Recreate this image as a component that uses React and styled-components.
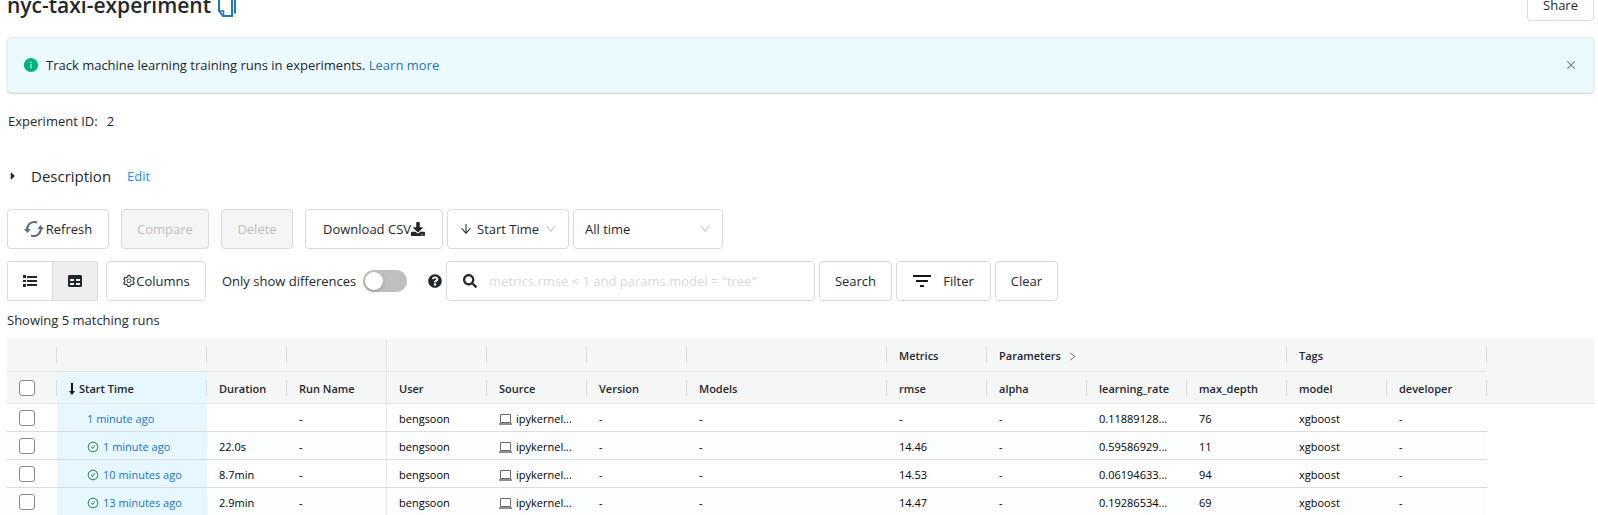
import React from "react";
import styled, { createGlobalStyle } from "styled-components";
import {
  AiFillInfoCircle, AiOutlineArrowDown, AiOutlineCheckCircle, AiOutlineClose,
  AiOutlineDown, AiOutlineRight, AiOutlineSetting,
} from "react-icons/ai";
import { FaCaretRight, FaDownload, FaQuestionCircle, FaSearch } from "react-icons/fa";

const GlobalStyle = createGlobalStyle`
  * { box-sizing: border-box; }
  body {
    margin: 0;
    background: #fff;
    color: #1f272d;
    font: 13px/20px "Open Sans", "Noto Sans", sans-serif;
  }
  button, input, select { font: inherit; color: inherit; }
  a { color: #2374bb; text-decoration: none; }
  svg { flex: none; }
`;

const Page = styled.main`
  padding: 0 4px 0 7px;
`;

const Header = styled.header`
  display: flex;
  justify-content: space-between;
  align-items: center;
  margin-top: -11px;
  height: 32px;
`;

const TitleGroup = styled.div`
  display: flex;
  align-items: center;
  gap: 7px;
`;

const Title = styled.h1`
  margin: 0;
  font-size: 21px;
  line-height: 28px;
  font-weight: 600;
`;

const IconButton = styled.button`
  display: inline-flex;
  align-items: center;
  justify-content: center;
  padding: 0;
  border: 0;
  background: none;
  color: ${(p) => p.$color || "inherit"};
  cursor: pointer;
`;

const Button = styled.button`
  display: inline-flex;
  align-items: center;
  justify-content: center;
  gap: ${(p) => p.$gap || 0}px;
  flex: none;
  width: ${(p) => p.$width}px;
  height: ${(p) => (p.$small ? 32 : 40)}px;
  padding: 0;
  border: 1px solid #d9d9d9;
  border-radius: 4px;
  background: #fff;
  cursor: pointer;
  white-space: nowrap;

  &:disabled {
    background: #f5f5f5;
    color: #bfbfbf;
    cursor: default;
  }
`;

const Alert = styled.section`
  display: flex;
  align-items: center;
  gap: 7px;
  height: 56px;
  margin-top: 16px;
  padding: 0 16px 0 15px;
  border: 1px solid #e4eeee;
  border-radius: 4px;
  background: #ebfaff;
  box-shadow: 0 1px 2px rgba(0, 0, 0, 0.16);

  > svg { color: #00b379; }
  > span { flex: 1; }
`;

const Meta = styled.div`
  display: flex;
  gap: 9px;
  margin-top: 18px;
  padding-left: 1px;
`;

const Description = styled.div`
  display: flex;
  align-items: center;
  gap: 16px;
  margin-top: 33px;
  height: 24px;
`;

const Disclosure = styled.button`
  display: flex;
  align-items: center;
  gap: 12px;
  padding: 0;
  border: 0;
  background: none;
  font-size: 15px;
`;

const EditLink = styled.a`
  color: #1890ff;
`;

const Toolbar = styled.div`
  display: flex;
  align-items: center;
  gap: 4px;
  margin-top: ${(p) => p.$top}px;
`;

const Actions = styled.div`
  display: flex;
  gap: 12px;
`;

const SelectBox = styled.label`
  display: flex;
  align-items: center;
  gap: 4px;
  width: ${(p) => p.$width}px;
  height: 40px;
  padding: 0 11px;
  border: 1px solid #d9d9d9;
  border-radius: 4px;

  select {
    flex: 1;
    min-width: 0;
    padding: 0;
    border: 0;
    outline: 0;
    background: none;
    appearance: none;
  }
  > svg:last-child { color: #bfbfbf; }
`;

const ViewSwitch = styled.div`
  display: flex;
  margin-right: 4px;
`;

const ViewButton = styled(Button)`
  border-radius: ${(p) => (p.$active ? "0 2px 2px 0" : "2px 0 0 2px")};
  border-left-width: ${(p) => (p.$active ? 0 : 1)}px;
  background: ${(p) => (p.$active ? "#eee" : "#fff")};
`;

const SwitchLabel = styled.label`
  display: flex;
  align-items: center;
  justify-content: space-between;
  width: 185px;
  margin-left: 12px;
  white-space: nowrap;
`;

const Switch = styled.input`
  appearance: none;
  display: flex;
  align-items: center;
  width: 44px;
  height: 22px;
  margin: 0;
  padding: 2px;
  border-radius: 11px;
  background: #bfbfbf;

  &::before {
    content: "";
    width: 18px;
    height: 18px;
    border-radius: 9px;
    background: #fff;
    box-shadow: 0 2px 4px rgba(0, 35, 11, 0.2);
  }
`;

const HelpButton = styled(IconButton)`
  margin-left: 17px;
`;

const SearchBox = styled.label`
  display: flex;
  align-items: center;
  gap: 12px;
  width: 369px;
  height: 40px;
  padding: 0 16px;
  border: 1px solid #d9d9d9;
  border-radius: 4px;

  input {
    flex: 1;
    min-width: 0;
    padding: 0;
    border: 0;
    outline: 0;
  }
  input::placeholder { color: #d9d9d9; opacity: 1; }
`;

const Summary = styled.p`
  margin: 9px 0;
`;

const Table = styled.table`
  width: 100%;
  table-layout: fixed;
  border-collapse: separate;
  border-spacing: 0;
  font-size: 11px;
  line-height: 16px;
`;

const HeadCell = styled.th`
  height: ${(p) => (p.$group ? 33 : 32)}px;
  padding: ${(p) => (p.$check ? "0 12px" : "2px 12px 0")};
  border-bottom: 1px solid ${(p) => (p.$filler && p.$group ? "#f5f7f7" : "#e2e4e5")};
  border-right: ${(p) => (p.$pinned ? "1px solid #e2e4e5" : 0)};
  background: ${(p) => (p.$pinned || p.$filler ? "none" : "linear-gradient(#d9dcde, #d9dcde) right center / 1px 16px")} no-repeat
    ${(p) => (p.$sorted ? "#e6f7ff" : "#f5f7f7")};
  text-align: left;
  font-weight: 600;
  white-space: nowrap;
`;

const HeadLabel = styled.span`
  display: flex;
  align-items: center;
  gap: ${(p) => p.$gap || 0}px;
`;

const Row = styled.tr`
  background: ${(p) => (p.$odd ? "#fcfdfe" : "#fff")};
`;

const Cell = styled.td`
  height: 28px;
  padding: 2px 12px 0;
  border-bottom: 1px solid #d9dcde;
  border-right: ${(p) => (p.$pinned ? "1px solid #e8eaeb" : 0)};
  color: #000;
  white-space: nowrap;
  overflow: hidden;
  text-overflow: ellipsis;

  tr:last-child > & {
    height: 27px;
    border-bottom: 0;
  }
`;

const CheckCell = styled(Cell)`
  padding-top: 0;
`;

const TimeCell = styled(Cell)`
  padding-left: 30px;
  background: #e6f7ff;
`;

const FillerCell = styled(Cell)`
  border-bottom: 0;
  background: #fff;
`;

const Inline = styled.span`
  display: flex;
  align-items: center;
  gap: 4px;

  > svg { color: #2e8555; }
`;

const Checkbox = styled.input`
  appearance: none;
  display: block;
  width: 16px;
  height: 16px;
  margin: 0;
  border: 1px solid #7f8b94;
  border-radius: 3px;
  background: #fff;
`;

const CopyIcon = () => (
  <svg width="18" height="24" viewBox="0 0 18 24" fill="none" stroke="#2374bb" strokeWidth="2">
    <path d="M1 1v17l4 5h9V1z" />
    <path d="M1.500 18H5.500V22.500" strokeWidth="1.500" />
    <path d="M17 1v19.500" />
  </svg>
);

const RefreshIcon = () => (
  <svg width="20" height="18" viewBox="0 0 20 18" fill="none" stroke="#5b6b77" strokeWidth="2">
    <path d="M3 10C3 4 8 0.500 13 2.500" />
    <path d="M17 8C17 14 12 17.500 7 15.500" />
    <path d="M0 9h6.500L3.500 13z" fill="#5b6b77" stroke="none" />
    <path d="M13.500 9H20L16.500 5z" fill="#5b6b77" stroke="none" />
  </svg>
);

const ListIcon = () => (
  <svg width="14" height="12" viewBox="0 0 14 12" fill="#1f272d">
    <path d="M0 0h3v3H0zM0 5h3v2H0zM0 9h3v3H0zM4 1h10v2H4zM4 5h10v2H4zM4 9h10v2H4z" />
  </svg>
);

const TableIcon = () => (
  <svg width="14" height="12" viewBox="0 0 14 12" fill="#1f272d">
    <path fillRule="evenodd" d="M1 0h12l1 1v10l-1 1H1l-1-1V1zM2 4v2h4V4zM8 4v2h4V4zM2 8v2h4V8zM8 8v2h4V8z" />
  </svg>
);

const FilterIcon = () => (
  <svg width="18" height="12" viewBox="0 0 18 12" fill="#11171c">
    <rect width="18" height="2" rx="0.500" />
    <rect x="3" y="5" width="12" height="2" rx="0.500" />
    <rect x="7" y="10" width="4" height="2" rx="0.500" />
  </svg>
);

const SortIcon = () => (
  <svg width="6" height="12" viewBox="0 0 6 12" fill="#11171c">
    <path d="M2 0h2v8h2l-3 4-3-4h2z" />
  </svg>
);

const LaptopIcon = () => (
  <svg width="13" height="12" viewBox="0 0 13 12" fill="none" stroke="#6b6b6b">
    <path d="M1.500 1.500h10v8h-10z" />
    <path d="M0 11h13" strokeWidth="2" stroke="#8c8c8c" />
  </svg>
);

const COLUMNS = [
  { label: "Duration", width: 80 },
  { label: "Run Name", width: 100, pinned: true },
  { label: "User", width: 100 },
  { label: "Source", width: 100 },
  { label: "Version", width: 100 },
  { label: "Models", width: 200 },
  { label: "rmse", width: 100 },
  { label: "alpha", width: 100 },
  { label: "learning_rate", width: 100 },
  { label: "max_depth", width: 100 },
  { label: "model", width: 100 },
  { label: "developer", width: 100 },
];

const RUNS = [
  { time: "1 minute ago", duration: "", rmse: "-", rate: "0.11889128...", depth: 76 },
  { time: "1 minute ago", done: true, duration: "22.0s", rmse: "14.46", rate: "0.59586929...", depth: 11 },
  { time: "10 minutes ago", done: true, duration: "8.7min", rmse: "14.53", rate: "0.06194633...", depth: 94 },
  { time: "13 minutes ago", done: true, duration: "2.9min", rmse: "14.47", rate: "0.19286534...", depth: 69 },
];

function RunsTable() {
  return (
    <Table>
      <colgroup>
        <col width="50" />
        <col width="150" />
        {COLUMNS.map((c) => <col key={c.label} width={c.width} />)}
        <col />
      </colgroup>
      <thead>
        <tr>
          <HeadCell $group />
          <HeadCell $group />
          <HeadCell $group />
          <HeadCell $group $pinned />
          <HeadCell $group />
          <HeadCell $group />
          <HeadCell $group />
          <HeadCell $group />
          <HeadCell $group>Metrics</HeadCell>
          <HeadCell $group colSpan={3}>
            <HeadLabel $gap={6}>Parameters <AiOutlineRight size={11} color="#6b7780" /></HeadLabel>
          </HeadCell>
          <HeadCell $group colSpan={2}>Tags</HeadCell>
          <HeadCell $group $filler />
        </tr>
        <tr>
          <HeadCell $check><Checkbox type="checkbox" aria-label="Select all runs" /></HeadCell>
          <HeadCell $sorted><HeadLabel $gap={4}><SortIcon />Start Time</HeadLabel></HeadCell>
          {COLUMNS.map((c) => <HeadCell key={c.label} $pinned={c.pinned}>{c.label}</HeadCell>)}
          <HeadCell $filler />
        </tr>
      </thead>
      <tbody>
        {RUNS.map((r, i) => (
          <Row key={i} $odd={i % 2 === 1}>
            <CheckCell><Checkbox type="checkbox" aria-label={`Select run ${i + 1}`} /></CheckCell>
            <TimeCell>
              <Inline>
                {r.done && <AiOutlineCheckCircle size={12} />}
                <a href="#run">{r.time}</a>
              </Inline>
            </TimeCell>
            <Cell>{r.duration}</Cell>
            <Cell $pinned>-</Cell>
            <Cell>bengsoon</Cell>
            <Cell><Inline><LaptopIcon />ipykernel...</Inline></Cell>
            <Cell>-</Cell>
            <Cell>-</Cell>
            <Cell>{r.rmse}</Cell>
            <Cell>-</Cell>
            <Cell>{r.rate}</Cell>
            <Cell>{r.depth}</Cell>
            <Cell>xgboost</Cell>
            <Cell>-</Cell>
            <FillerCell />
          </Row>
        ))}
      </tbody>
    </Table>
  );
}

export default function App() {
  return (
    <Page>
      <GlobalStyle />
      <Header>
        <TitleGroup>
          <Title>nyc-taxi-experiment</Title>
          <IconButton aria-label="Copy name"><CopyIcon /></IconButton>
        </TitleGroup>
        <Button $width={67} $small>Share</Button>
      </Header>

      <Alert>
        <AiFillInfoCircle size={16} />
        <span>Track machine learning training runs in experiments. <a href="#learn">Learn more</a></span>
        <IconButton aria-label="Close" $color="#6b7780"><AiOutlineClose size={12} /></IconButton>
      </Alert>

      <Meta><span>Experiment ID:</span><span>2</span></Meta>

      <Description>
        <Disclosure><FaCaretRight size={12} />Description</Disclosure>
        <EditLink href="#edit">Edit</EditLink>
      </Description>

      <Toolbar $top={21}>
        <Actions>
          <Button $width={102} $gap={2}><RefreshIcon />Refresh</Button>
          <Button $width={88} disabled>Compare</Button>
          <Button $width={72} disabled>Delete</Button>
          <Button $width={138}>Download CSV<FaDownload size={14} /></Button>
        </Actions>
        <SelectBox $width={122}>
          <AiOutlineArrowDown size={14} />
          <select aria-label="Sort by"><option>Start Time</option></select>
          <AiOutlineDown size={12} />
        </SelectBox>
        <SelectBox $width={150}>
          <select aria-label="Time range"><option>All time</option></select>
          <AiOutlineDown size={12} />
        </SelectBox>
      </Toolbar>

      <Toolbar $top={12}>
        <ViewSwitch>
          <ViewButton $width={46} aria-label="List view"><ListIcon /></ViewButton>
          <ViewButton $width={45} $active aria-label="Table view"><TableIcon /></ViewButton>
        </ViewSwitch>
        <Button $width={100}><AiOutlineSetting size={14} />Columns</Button>
        <SwitchLabel>Only show differences<Switch type="checkbox" role="switch" /></SwitchLabel>
        <HelpButton aria-label="Help"><FaQuestionCircle size={14} /></HelpButton>
        <SearchBox>
          <FaSearch size={14} />
          <input aria-label="Search runs" placeholder={'metrics.rmse < 1 and params.model = "tree"'} />
        </SearchBox>
        <Button $width={73}>Search</Button>
        <Button $width={95} $gap={12}><FilterIcon />Filter</Button>
        <Button $width={63}>Clear</Button>
      </Toolbar>

      <Summary>Showing 5 matching runs</Summary>
      <RunsTable />
    </Page>
  );
}
